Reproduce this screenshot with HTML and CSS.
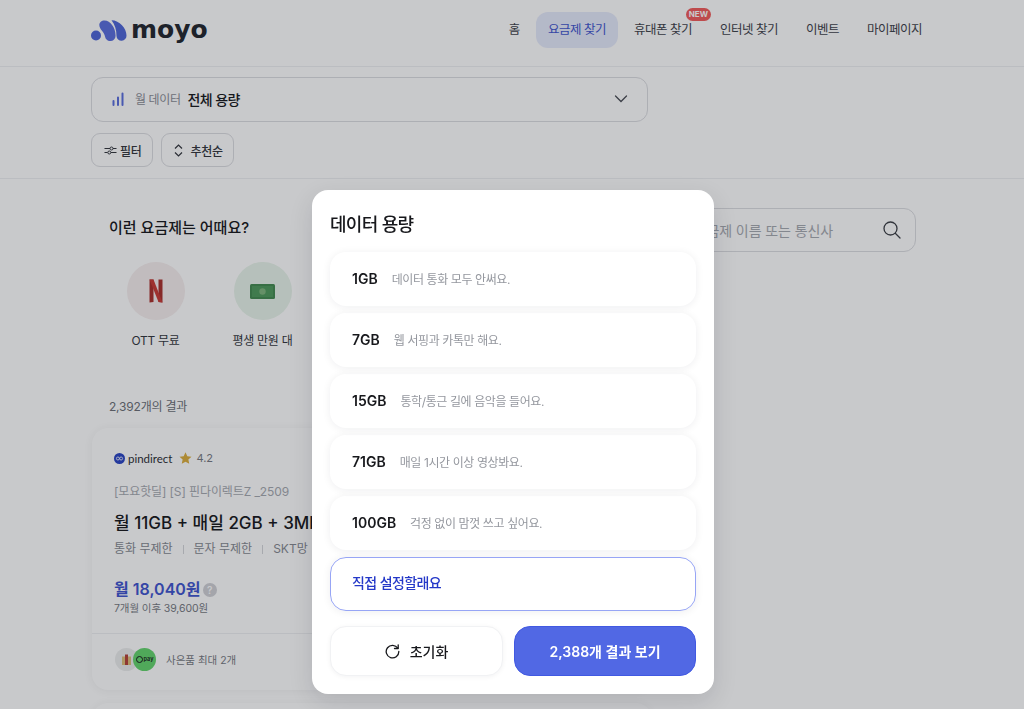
FILE: index.html
```html
<!DOCTYPE html>
<html lang="ko">
<head>
  <meta charset="UTF-8" />
  <title>모요 요금제 찾기</title>
  <link rel="stylesheet" href="styles.css">
</head>
<body>
  <div class="pagina">
    <header class="topo">
      <div class="logo">
        <svg class="logo-marca" width="36" height="21" viewBox="0 0 36 21">
          <circle cx="5" cy="15.500" r="5" fill="#4f66d8"/>
          <path d="M13.500 0.500 C19.500 0.500 24.500 8 24.500 15 A5.300 5.300 0 0 1 14 16.500 C13.500 12 8.300 9.500 8.300 5 C8.300 2.500 10.500 0.500 13.500 0.500 Z" fill="#5a6edd"/>
          <path d="M20.500 0.300 C28.500 0.300 35.500 8.500 35.500 15.500 A5 5 0 0 1 25.500 16 C25.500 10 24 4.500 20.500 0.300 Z" fill="#4f66d8"/>
        </svg>
        <span class="logo-texto">moyo</span>
      </div>
      <nav class="menu">
        <a class="menu-item">홈</a>
        <a class="menu-item ativo">요금제 찾기</a>
        <a class="menu-item">휴대폰 찾기<span class="selo">NEW</span></a>
        <a class="menu-item">인터넷 찾기</a>
        <a class="menu-item">이벤트</a>
        <a class="menu-item">마이페이지</a>
      </nav>
    </header>

    <section class="filtros">
      <div class="seletor">
        <svg width="14" height="14" viewBox="0 0 14 14"><path d="M1.500 13V9M6 13V5.500M10.500 13V1.500" stroke="#5a6edd" stroke-width="2" stroke-linecap="round"/></svg>
        <span class="seletor-rotulo">월 데이터</span>
        <span class="seletor-valor">전체 용량</span>
        <svg class="seletor-seta" width="14" height="8" viewBox="0 0 14 8"><path d="M1.500 1 L7 6.500 L12.500 1" fill="none" stroke="#4a4d55" stroke-width="1.300" stroke-linecap="round"/></svg>
      </div>
      <div class="botoes-filtro">
        <button class="btn-filtro">
          <svg width="13" height="9" viewBox="0 0 13 9"><path d="M0.500 2.500H6M9 2.500H12.500M0.500 6.500H3.500M7 6.500H12.500" stroke="#33363d" stroke-width="1.100" fill="none"/><circle cx="7.500" cy="2.500" r="1.500" fill="none" stroke="#33363d"/><circle cx="5.300" cy="6.500" r="1.500" fill="none" stroke="#33363d"/></svg>
          필터
        </button>
        <button class="btn-filtro btn-ordem">
          <svg width="9" height="13" viewBox="0 0 9 13"><path d="M1 4.500 L4.500 1 L8 4.500M1 8.500 L4.500 12 L8 8.500" fill="none" stroke="#33363d" stroke-width="1.200"/></svg>
          추천순
        </button>
      </div>
    </section>

    <main class="conteudo">
      <div class="coluna-esq">
        <h2>이런 요금제는 어때요?</h2>
        <div class="temas">
          <div class="tema">
            <div class="tema-icone rosa">
              <svg width="14" height="24" viewBox="0 0 14 24"><path d="M0.500 0.500H4.500V23L0.500 23.500Z" fill="#a92f2c"/><path d="M9.500 0.500H13.500V23.500L9.500 23Z" fill="#a92f2c"/><path d="M0.500 0.500H4.500L13.500 23.500L9.500 23Z" fill="#c93a35"/></svg>
            </div>
            <span>OTT 무료</span>
          </div>
          <div class="tema">
            <div class="tema-icone verde">
              <svg width="25" height="15" viewBox="0 0 25 15"><rect width="25" height="15" rx="1.500" fill="#438a50"/><rect x="2" y="2" width="21" height="11" fill="#4f9a5c"/><circle cx="12.500" cy="7.500" r="3.200" fill="#7fb57d"/></svg>
            </div>
            <span>평생 만원 대</span>
          </div>
        </div>
        <p class="contagem">2,392개의 결과</p>

        <article class="cartao">
          <div class="cartao-corpo">
            <div class="marca">
              <svg width="11" height="11" viewBox="0 0 11 11"><circle cx="5.500" cy="5.500" r="5.500" fill="#2a44c4"/><circle cx="3.900" cy="5.500" r="1.500" fill="none" stroke="#fff" stroke-width=".8"/><circle cx="7.100" cy="5.500" r="1.500" fill="none" stroke="#fff" stroke-width=".8"/></svg>
              <span class="marca-nome">pindirect</span>
              <svg class="marca-estrela" width="13" height="12" viewBox="0 0 24 23"><path d="M12 0.500 L15.500 8 L23.500 9 L17.500 14.500 L19.200 22.500 L12 18.500 L4.800 22.500 L6.500 14.500 L0.500 9 L8.500 8 Z" fill="#dcae3c"/></svg>
              <span class="marca-nota">4.2</span>
            </div>
            <p class="plano-tag">[모요핫딜] [S] 핀다이렉트Z _2509</p>
            <h3 class="plano-nome">월 11GB + 매일 2GB + 3Mbps</h3>
            <div class="plano-info">
              <span>통화 무제한</span><i></i><span>문자 무제한</span><i></i><span>SKT망</span><i></i><span>LTE</span>
            </div>
            <div class="preco">월 18,040원 <span class="ajuda">?</span></div>
            <p class="preco-depois">7개월 이후 39,600원</p>
          </div>
          <div class="cartao-rodape">
            <div class="brindes">
              <span class="brinde cinza">
                <svg width="9" height="11" viewBox="0 0 9 11"><rect y="2.500" width="9" height="8.500" fill="#dcc07a"/><rect x="3" y="0.500" width="3" height="10.500" fill="#b5423a"/></svg>
              </span>
              <span class="brinde pay">pay</span>
            </div>
            <span>사은품 최대 2개</span>
          </div>
        </article>
        <article class="cartao"></article>
      </div>

      <div class="coluna-dir">
        <div class="busca">
          <span>요금제 이름 또는 통신사</span>
          <svg width="18" height="18" viewBox="0 0 18 18"><circle cx="7.500" cy="7.500" r="6.500" fill="none" stroke="#3c3f46" stroke-width="1.300"/><path d="M12.500 12.500 L17 17" stroke="#3c3f46" stroke-width="1.300" stroke-linecap="round"/></svg>
        </div>
      </div>
    </main>
  </div>

  <div class="fundo">
    <div class="modal">
      <h2 class="modal-titulo">데이터 용량</h2>
      <ul class="opcoes">
        <li class="opcao"><b>1GB</b><span>데이터 통화 모두 안써요.</span></li>
        <li class="opcao"><b>7GB</b><span>웹 서핑과 카톡만 해요.</span></li>
        <li class="opcao"><b>15GB</b><span>통학/통근 길에 음악을 들어요.</span></li>
        <li class="opcao"><b>71GB</b><span>매일 1시간 이상 영상봐요.</span></li>
        <li class="opcao"><b>100GB</b><span>걱정 없이 맘껏 쓰고 싶어요.</span></li>
        <li class="opcao direto"><b>직접 설정할래요</b></li>
      </ul>
      <div class="modal-acoes">
        <button class="btn-limpar">
          <svg width="15" height="15" viewBox="0 0 15 15"><path d="M12.800 4.200 A6.300 6.300 0 1 0 13.800 7.500" fill="none" stroke="#17181c" stroke-width="1.300" stroke-linecap="round"/><path d="M13.200 0.800 V4.500 H9.500" fill="none" stroke="#17181c" stroke-width="1.300" stroke-linecap="round" stroke-linejoin="round"/></svg>
          초기화
        </button>
        <button class="btn-ver">2,388개 결과 보기</button>
      </div>
    </div>
  </div>
</body>
</html>
```

FILE: styles.css
```css
:root {
  --azul: #5168e4;
  --azul-escuro: #2438c8;
  --preto: #17181c;
  --cinza: #8b8e96;
  --linha: #eff0f2;
}
* {
  box-sizing: border-box;
}
html, body {
  margin: 0;
  height: 100%;
  overflow: hidden;
}
body {
  font-family: 'Inter', 'Noto Sans CJK KR', sans-serif;
  color: var(--preto);
  background-color: white;
}
h2, h3, p, ul {
  margin: 0;
  padding: 0;
}
button {
  font-family: inherit;
  cursor: pointer;
}
.pagina {
  height: 100vh;
  overflow: hidden;
}

.topo {
  height: 67px;
  padding: 0 90px 0 91px;
  display: flex;
  align-items: flex-start;
  justify-content: space-between;
  border-bottom: 1px solid var(--linha);
}
.logo {
  display: flex;
  align-items: center;
  gap: 4px;
  margin-top: 15px;
}
.logo-texto {
  font-family: 'DejaVu Sans', sans-serif;
  font-size: 25px;
  line-height: 30px;
  font-weight: 700;
  color: #23262e;
}
.menu {
  display: flex;
  gap: 4px;
  margin-top: 12px;
}
.menu-item {
  position: relative;
  height: 36px;
  padding: 0 12px;
  border-radius: 12px;
  font-size: 12.500px;
  line-height: 36px;
  color: #3e4149;
  letter-spacing: -0.5px;
}
.menu-item.ativo {
  background-color: #e6eafb;
  color: #3f55cf;
}
.selo {
  position: absolute;
  top: -4px;
  right: -7px;
  height: 13px;
  padding: 0 3px;
  border-radius: 7px;
  background-color: #f25c5c;
  color: white;
  font-size: 8px;
  line-height: 13px;
  font-weight: 700;
  letter-spacing: 0;
}

.filtros {
  height: 112px;
  padding: 10px 91px 0;
  border-bottom: 1px solid var(--linha);
}
.seletor {
  width: 557px;
  height: 45px;
  padding: 0 19px 2px 20px;
  display: flex;
  align-items: center;
  border: 1px solid #dcdde1;
  border-radius: 12px;
}
.seletor-rotulo {
  margin-left: 9px;
  font-size: 12px;
  letter-spacing: -0.4px;
  color: var(--cinza);
}
.seletor-valor {
  margin-left: 7px;
  font-size: 14px;
  font-weight: 500;
  letter-spacing: -0.6px;
}
.seletor-seta {
  margin-left: auto;
}
.botoes-filtro {
  display: flex;
  gap: 8px;
  margin-top: 11px;
}
.btn-filtro {
  height: 34px;
  padding: 0 11px 0 12px;
  display: flex;
  align-items: center;
  gap: 3px;
  font-size: 12px;
  font-weight: 500;
  letter-spacing: -0.3px;
  color: #33363d;
  background-color: white;
  border: 1px solid #dcdde1;
  border-radius: 9px;
}
.btn-ordem {
  padding-right: 10px;
  gap: 7px;
}

.conteudo {
  display: flex;
  padding: 0 108px 0 92px;
}
.coluna-esq {
  width: 560px;
}
.coluna-dir {
  flex: 1;
  padding-top: 29px;
}
.coluna-esq h2 {
  margin: 38px 0 0 17px;
  font-size: 15px;
  line-height: 22px;
  font-weight: 500;
}
.temas {
  display: flex;
  gap: 28px;
  margin: 23px 0 0 24px;
}
.tema {
  width: 79px;
  display: flex;
  flex-direction: column;
  align-items: center;
  gap: 13px;
  font-size: 12px;
  line-height: 16px;
  letter-spacing: -0.3px;
  color: #33363d;
}
.tema-icone {
  width: 58px;
  height: 58px;
  border-radius: 50%;
  display: flex;
  align-items: center;
  justify-content: center;
}
.tema-icone.rosa {
  background-color: #f6eeee;
}
.tema-icone.verde {
  background-color: #e8f4ea;
}
.contagem {
  margin: 50px 0 0 17px;
  font-size: 12px;
  line-height: 16px;
  letter-spacing: -0.2px;
  color: #6c6f77;
}
.cartao {
  width: 560px;
  height: 262px;
  margin-top: 13px;
  border-radius: 16px;
  overflow: hidden;
  white-space: nowrap;
  box-shadow: 0 1px 10px rgba(20, 24, 40, 0.06);
}
.cartao-corpo {
  height: 206px;
  padding: 22px 22px 0;
  border-bottom: 1px solid var(--linha);
}
.marca {
  display: flex;
  align-items: center;
  gap: 3px;
  height: 16px;
}
.marca-nome {
  font-family: 'Lato', sans-serif;
  font-size: 11.500px;
  color: #2a2c33;
}
.marca-estrela {
  margin-left: 4px;
}
.marca-nota {
  font-size: 11px;
  color: #777a82;
  margin-left: 1px;
}
.plano-tag {
  margin-top: 18px;
  font-size: 12px;
  line-height: 16px;
  letter-spacing: -0.1px;
  color: #a6a9b0;
}
.plano-nome {
  margin-top: 10px;
  font-size: 17px;
  line-height: 26px;
  font-weight: 500;
}
.plano-info {
  margin-top: 4px;
  display: flex;
  align-items: center;
  gap: 10px;
  font-size: 12px;
  line-height: 18px;
  color: #868991;
}
.plano-info i {
  width: 1px;
  height: 9px;
  background-color: #d5d6da;
}
.preco {
  margin-top: 19px;
  font-size: 16px;
  line-height: 24px;
  font-weight: 600;
  color: #3f55cf;
}
.ajuda {
  display: inline-block;
  width: 14px;
  height: 14px;
  margin-left: -2px;
  border-radius: 50%;
  background-color: #d0d1d6;
  color: white;
  font-size: 10px;
  line-height: 14px;
  text-align: center;
  vertical-align: 1px;
}
.preco-depois {
  font-size: 10.500px;
  line-height: 16px;
  letter-spacing: -0.1px;
  color: #777a82;
}
.cartao-rodape {
  height: 50px;
  padding: 0 23px;
  display: flex;
  align-items: center;
  gap: 10px;
  font-size: 10.500px;
  color: #777a82;
}
.brindes {
  display: flex;
}
.brinde {
  width: 23px;
  height: 23px;
  border-radius: 50%;
  display: flex;
  align-items: center;
  justify-content: center;
}
.brinde.cinza {
  background-color: #eceded;
}
.brinde.pay {
  margin-left: -5px;
  gap: 1px;
  background-color: #63d56d;
  color: #17181c;
  font-size: 5.500px;
  font-weight: 600;
}
.brinde.pay::before {
  content: "";
  width: 5px;
  height: 5px;
  border: 1.500px solid #17181c;
  border-radius: 50%;
}
.busca {
  height: 44px;
  padding: 0 14px 0 0;
  display: flex;
  align-items: center;
  justify-content: flex-end;
  gap: 50px;
  border: 1px solid #dcdde1;
  border-radius: 12px;
  font-size: 14px;
  letter-spacing: -0.1px;
  color: #a6a9b0;
}

.fundo {
  position: fixed;
  inset: 0;
  padding: 0 0 15px 2px;
  display: flex;
  justify-content: center;
  align-items: flex-end;
  background-color: rgba(17, 20, 30, 0.23);
}
.modal {
  width: 402px;
  height: 504px;
  padding: 23px 18px 18px;
  background-color: white;
  border-radius: 16px;
  box-shadow: 0 8px 24px rgba(17, 20, 30, 0.12);
}
.modal-titulo {
  font-size: 18px;
  line-height: 24px;
  font-weight: 500;
  letter-spacing: -0.7px;
}
.opcoes {
  list-style: none;
  display: flex;
  flex-direction: column;
  gap: 7px;
  margin-top: 15px;
}
.opcao {
  height: 54px;
  padding: 0 22px 2px;
  display: flex;
  align-items: center;
  gap: 14px;
  border-radius: 16px;
  box-shadow: 0 1px 8px rgba(20, 24, 40, 0.07);
}
.opcao b {
  font-size: 14px;
  font-weight: 600;
}
.opcao span {
  font-size: 12px;
  letter-spacing: -0.4px;
  color: #94979e;
}
.opcao.direto {
  padding: 0 21px 4px;
  border: 1px solid #97a5f5;
}
.opcao.direto b {
  color: var(--azul-escuro);
  font-size: 14px;
  font-weight: 500;
  letter-spacing: -0.6px;
}
.modal-acoes {
  display: flex;
  gap: 11px;
  margin-top: 15px;
}
.btn-limpar, .btn-ver {
  height: 50px;
  display: flex;
  align-items: center;
  justify-content: center;
  border-radius: 16px;
  font-size: 14px;
  font-weight: 500;
}
.btn-limpar {
  width: 173px;
  gap: 10px;
  color: var(--preto);
  background-color: white;
  border: 1px solid #f1f2f4;
  box-shadow: 0 1px 5px rgba(20, 24, 40, 0.05);
}
.btn-ver {
  flex: 1;
  color: white;
  background-color: var(--azul);
  border: 1px solid #4159e2;
  font-weight: 600;
}
```
